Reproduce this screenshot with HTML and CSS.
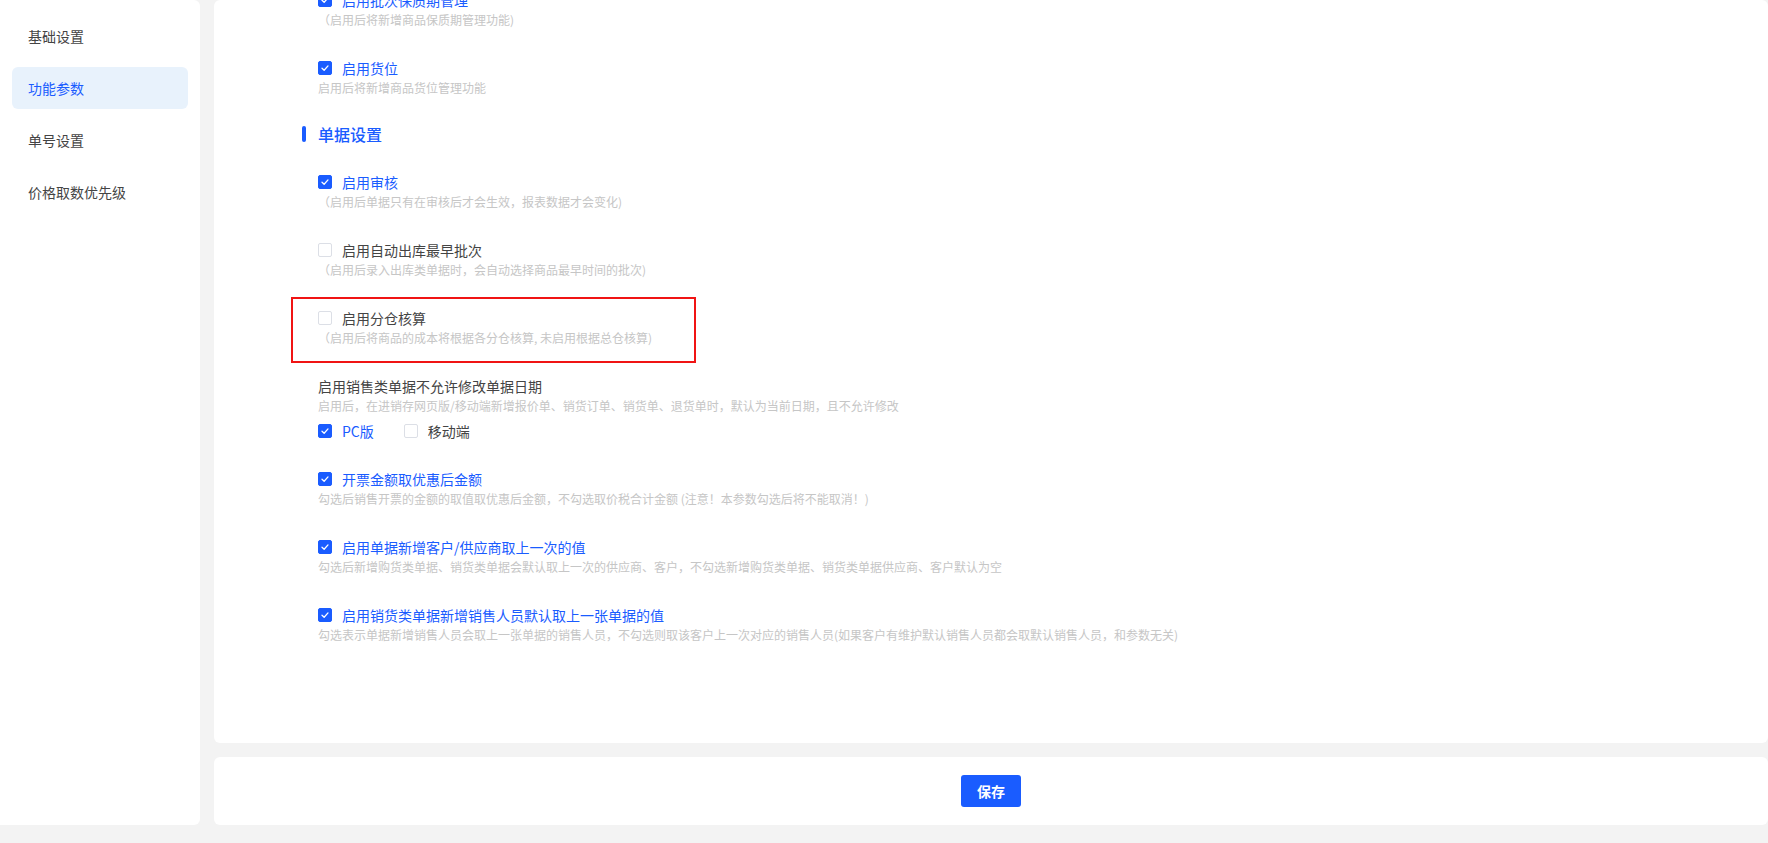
FILE: index.html
```html
<!DOCTYPE html>
<html lang="zh-CN">
<head>
<meta charset="utf-8">
<title>功能参数</title>
<link rel="stylesheet" href="styles.css">
</head>
<body>
<div class="page">
  <aside class="sidebar">
    <div class="nav-item">基础设置</div>
    <div class="nav-item active">功能参数</div>
    <div class="nav-item">单号设置</div>
    <div class="nav-item">价格取数优先级</div>
  </aside>
  <main class="main">
    <section class="content-card">
      <div class="list">
        <div class="item">
          <label class="check-row checked"><span class="cb"><svg viewBox="0 0 14 14"><polyline points="3.5,7.2 6,9.6 10.5,4.6"/></svg></span><span>启用批次保质期管理</span></label>
          <div class="desc">（启用后将新增商品保质期管理功能)</div>
        </div>
        <div class="item">
          <label class="check-row checked"><span class="cb"><svg viewBox="0 0 14 14"><polyline points="3.5,7.2 6,9.6 10.5,4.6"/></svg></span><span>启用货位</span></label>
          <div class="desc">启用后将新增商品货位管理功能</div>
        </div>

        <h2 class="section-title">单据设置</h2>

        <div class="item">
          <label class="check-row checked"><span class="cb"><svg viewBox="0 0 14 14"><polyline points="3.5,7.2 6,9.6 10.5,4.6"/></svg></span><span>启用审核</span></label>
          <div class="desc">（启用后单据只有在审核后才会生效，报表数据才会变化)</div>
        </div>
        <div class="item">
          <label class="check-row"><span class="cb"></span><span>启用自动出库最早批次</span></label>
          <div class="desc">（启用后录入出库类单据时，会自动选择商品最早时间的批次)</div>
        </div>
        <div class="item">
          <label class="check-row"><span class="cb"></span><span>启用分仓核算</span></label>
          <div class="desc">（启用后将商品的成本将根据各分仓核算, 未启用根据总仓核算)</div>
          <div class="highlight"></div>
        </div>
        <div class="item">
          <div class="plain-title">启用销售类单据不允许修改单据日期</div>
          <div class="desc">启用后，在进销存网页版/移动端新增报价单、销货订单、销货单、退货单时，默认为当前日期，且不允许修改</div>
          <div class="options">
            <label class="check-row checked"><span class="cb"><svg viewBox="0 0 14 14"><polyline points="3.5,7.2 6,9.6 10.5,4.6"/></svg></span><span>PC版</span></label>
            <label class="check-row"><span class="cb"></span><span>移动端</span></label>
          </div>
        </div>
        <div class="item">
          <label class="check-row checked"><span class="cb"><svg viewBox="0 0 14 14"><polyline points="3.5,7.2 6,9.6 10.5,4.6"/></svg></span><span>开票金额取优惠后金额</span></label>
          <div class="desc">勾选后销售开票的金额的取值取优惠后金额，不勾选取价税合计金额 (注意！本参数勾选后将不能取消！)</div>
        </div>
        <div class="item">
          <label class="check-row checked"><span class="cb"><svg viewBox="0 0 14 14"><polyline points="3.5,7.2 6,9.6 10.5,4.6"/></svg></span><span>启用单据新增客户/供应商取上一次的值</span></label>
          <div class="desc">勾选后新增购货类单据、销货类单据会默认取上一次的供应商、客户，不勾选新增购货类单据、销货类单据供应商、客户默认为空</div>
        </div>
        <div class="item">
          <label class="check-row checked"><span class="cb"><svg viewBox="0 0 14 14"><polyline points="3.5,7.2 6,9.6 10.5,4.6"/></svg></span><span>启用销货类单据新增销售人员默认取上一张单据的值</span></label>
          <div class="desc">勾选表示单据新增销售人员会取上一张单据的销售人员，不勾选则取该客户上一次对应的销售人员(如果客户有维护默认销售人员都会取默认销售人员，和参数无关)</div>
        </div>
      </div>
    </section>
    <footer class="footer-card">
      <button class="btn-save">保存</button>
    </footer>
  </main>
</div>
</body>
</html>
```

FILE: styles.css
```css
* { box-sizing: border-box; }

html, body {
  margin: 0;
  padding: 0;
}

body {
  background: #f3f3f3;
  font-family: "Noto Sans CJK SC", "Noto Sans", "Liberation Sans", sans-serif;
  color: #333;
  width: 1768px;
  height: 843px;
  overflow: hidden;
}

.page {
  display: flex;
  gap: 14px;
  height: 843px;
  padding-bottom: 18px;
}

.sidebar {
  width: 200px;
  flex: none;
  background: #fff;
  border-radius: 0 6px 6px 0;
  padding: 15px 12px;
  display: flex;
  flex-direction: column;
  gap: 10px;
}

.nav-item {
  height: 42px;
  line-height: 42px;
  padding-left: 16px;
  font-size: 14px;
  color: #444;
  border-radius: 6px;
}

.nav-item.active {
  background: #e8f2fc;
  color: #1a5cff;
}

.main {
  flex: 1;
  display: flex;
  flex-direction: column;
  gap: 14px;
  min-width: 0;
}

.content-card {
  flex: 1;
  background: #fff;
  border-radius: 6px;
  overflow: hidden;
  padding-left: 104px;
}

.list {
  margin-top: -10px;
}

.item {
  position: relative;
  margin-bottom: 28px;
}

.check-row {
  display: flex;
  align-items: center;
  gap: 10px;
  height: 20px;
  font-size: 14px;
  color: #444;
}

.check-row.checked {
  color: #1a5cff;
}

.cb {
  width: 14px;
  height: 14px;
  flex: none;
  border: 1px solid #dcdfe6;
  border-radius: 2px;
  background: #fff;
  display: flex;
}

.checked .cb {
  background: #1a5cff;
  border-color: #1a5cff;
}

.cb svg {
  width: 12px;
  height: 12px;
  fill: none;
  stroke: #fff;
  stroke-width: 1.5;
  stroke-linecap: round;
  stroke-linejoin: round;
}

.desc {
  font-size: 12px;
  line-height: 20px;
  color: #c6c6c6;
  white-space: nowrap;
}

.plain-title {
  font-size: 14px;
  line-height: 20px;
  color: #444;
}

.options {
  display: flex;
  gap: 30px;
  margin-top: 5px;
}

.section-title {
  margin: -1px 0 29px -16px;
  height: 18px;
  display: flex;
  align-items: center;
  gap: 12px;
  font-size: 16px;
  font-weight: 500;
  color: #1a5cff;
}

.section-title::before {
  content: "";
  width: 4px;
  height: 16px;
  border-radius: 2px;
  background: #1a5cff;
}

.highlight {
  position: absolute;
  top: -11px;
  left: -27px;
  width: 405px;
  height: 66px;
  border: 2px solid #f01414;
  pointer-events: none;
}

.footer-card {
  height: 68px;
  flex: none;
  background: #fff;
  border-radius: 6px;
  display: flex;
  align-items: center;
  justify-content: center;
}

.btn-save {
  width: 60px;
  height: 32px;
  border: none;
  border-radius: 3px;
  background: #1a5cff;
  color: #fff;
  font-family: inherit;
  font-size: 14px;
  font-weight: 700;
  padding: 0;
}
```
